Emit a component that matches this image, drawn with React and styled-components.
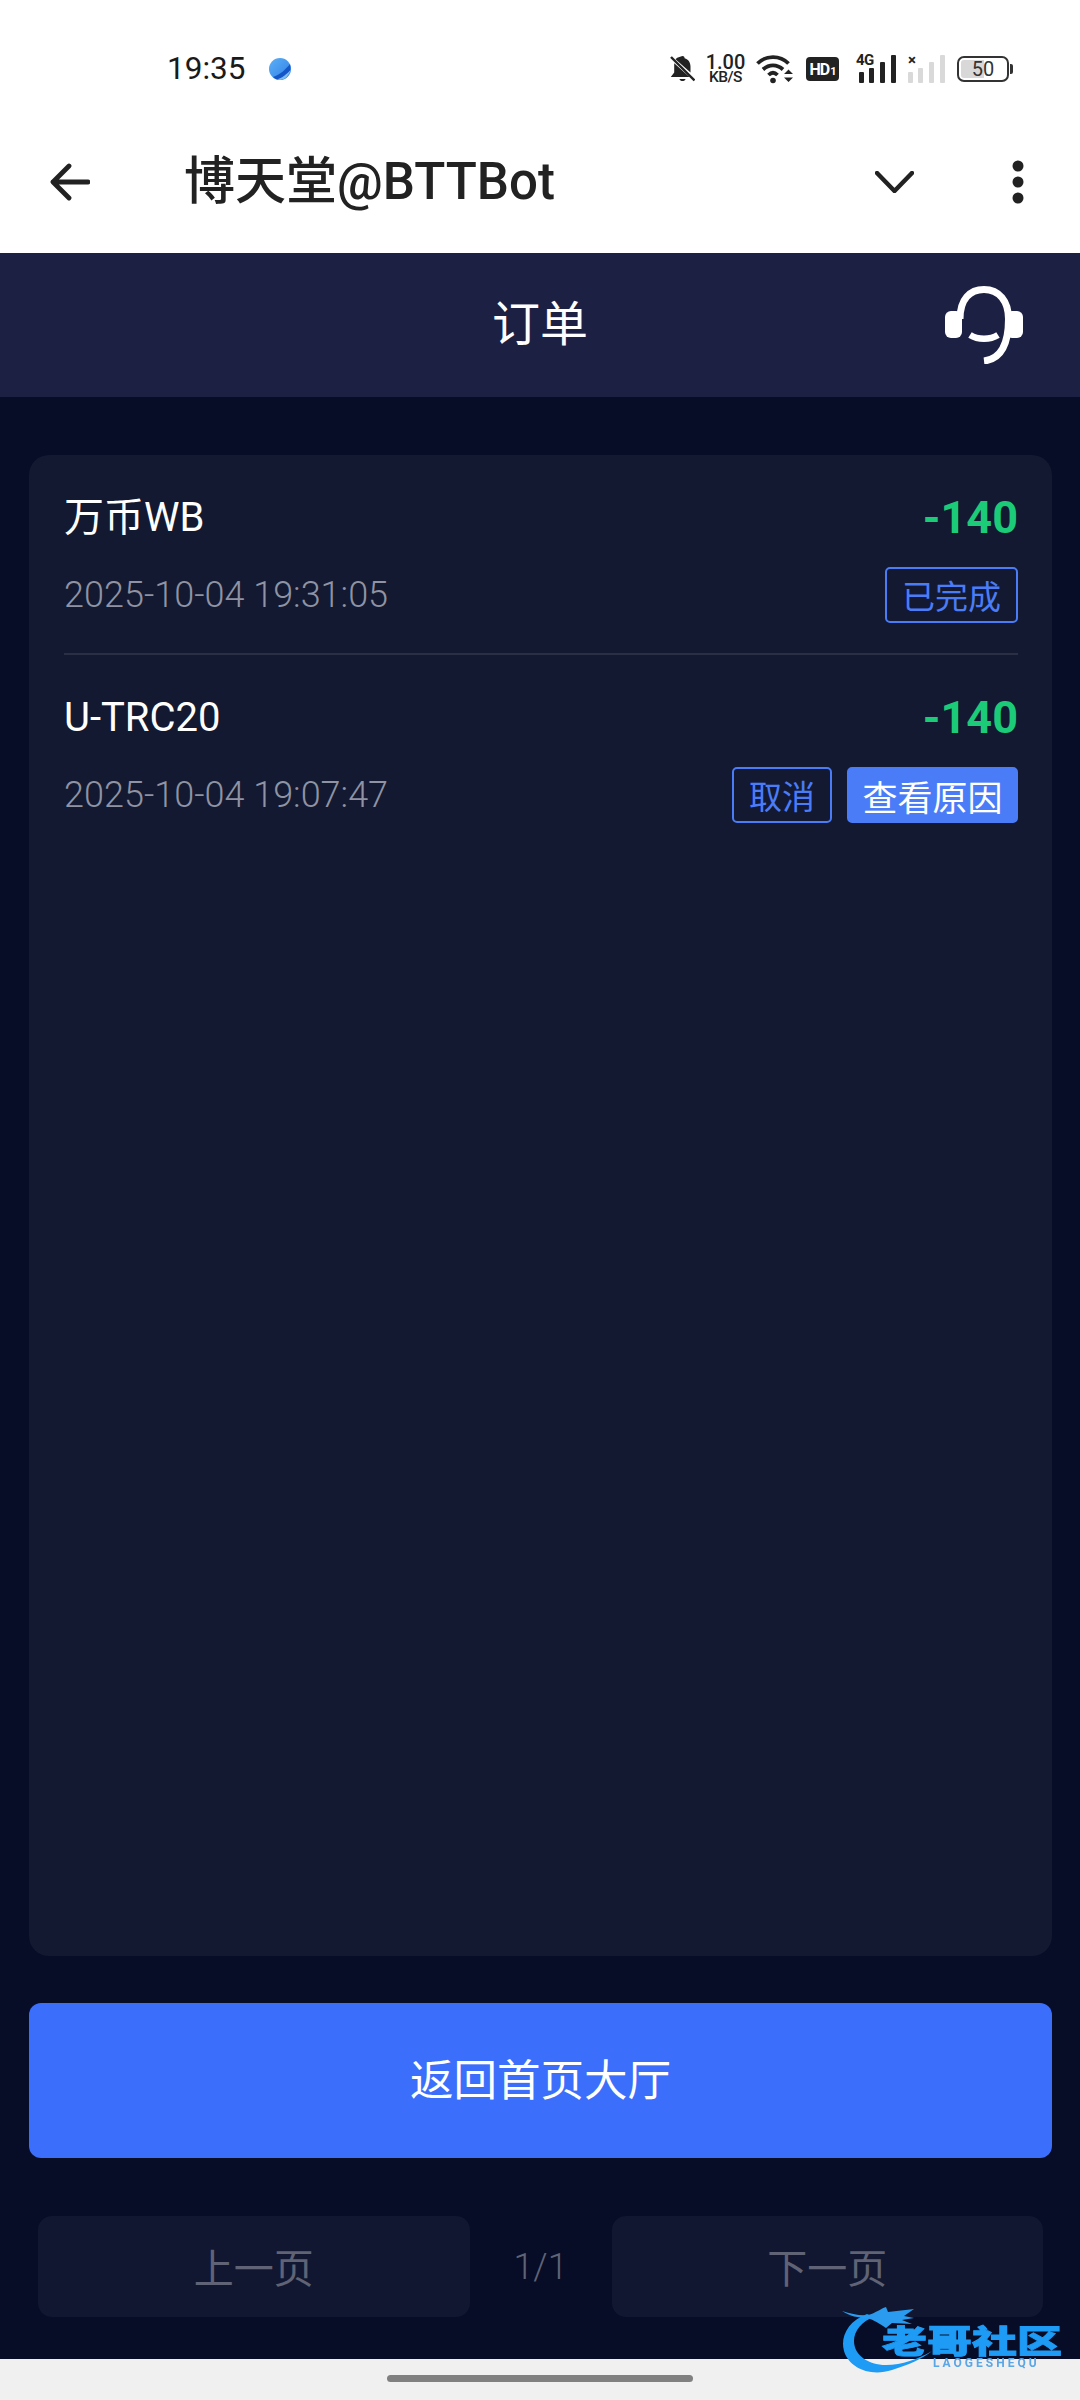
import React from "react";
import styled, { createGlobalStyle } from "styled-components";

const FONT = `Roboto, "Noto Sans CJK SC", sans-serif`;

const Global = createGlobalStyle`
  html, body { margin: 0; padding: 0; background: #fff; }
  * { box-sizing: border-box; }
`;

const Screen = styled.div`
  position: relative;
  width: 1080px;
  height: 2400px;
  display: flex;
  flex-direction: column;
  overflow: hidden;
  background: #070c27;
  font-family: ${FONT};
`;

const StatusBar = styled.div`
  height: 110px;
  background: #fff;
  display: flex;
  align-items: center;
  justify-content: space-between;
  padding: 28px 71px 0 167px;
  color: #1a1a1a;
`;
const StatusLeft = styled.div`
  display: flex;
  align-items: center;
  gap: 23px;
`;
const Clock = styled.span`
  font-size: 31.5px;
  line-height: 36px;
`;
const StatusRight = styled.div`
  display: flex;
  align-items: center;
`;
const Speed = styled.div`
  width: 39px;
  margin: 0 11px;
  display: flex;
  flex-direction: column;
  align-items: center;
  font-weight: 500;
  color: #222;
  white-space: nowrap;
`;
const SpeedValue = styled.span`
  font-size: 20px;
  line-height: 17px;
`;
const SpeedUnit = styled.span`
  font-size: 15.5px;
  line-height: 13px;
  letter-spacing: -0.5px;
`;
const HdBadge = styled.div`
  width: 33px;
  height: 24px;
  margin: 0 17px 0 11px;
  border-radius: 4px;
  background: #222;
  color: #fff;
  display: flex;
  align-items: center;
  justify-content: center;
  font-size: 16px;
  font-weight: 700;
  letter-spacing: -1px;
`;
const HdIndex = styled.span`
  font-size: 11px;
  margin-top: 4px;
  margin-left: 1px;
`;
const Signal = styled.div`
  position: relative;
  width: ${(p) => p.$w}px;
  height: 28px;
  margin-right: 12px;
`;
const SignalLabel = styled.span`
  position: absolute;
  left: 0;
  top: -2px;
  font-size: 15px;
  line-height: 15px;
  font-weight: 700;
  letter-spacing: -0.5px;
  color: #222;
`;
const Battery = styled.div`
  position: relative;
  width: 52px;
  height: 26px;
  border: 2px solid #333;
  border-radius: 7px;
  display: flex;
  align-items: center;
  justify-content: center;
  font-size: 20px;
  color: #333;
  background: linear-gradient(90deg, #d8d8d8 52%, #fff 52%);
  background-clip: content-box;
  padding: 2px;
  &::after {
    content: "";
    position: absolute;
    right: -6px;
    top: 6px;
    width: 3px;
    height: 10px;
    background: #333;
    border-radius: 0 2px 2px 0;
  }
`;

const AppBar = styled.div`
  height: 143px;
  background: #fff;
  display: flex;
  align-items: center;
  padding: 0 56px 0 50px;
  color: #222;
`;
const ChatTitle = styled.div`
  flex: 1;
  margin-left: 94px;
  font-size: 51px;
  font-weight: 500;
  line-height: 60px;
  white-space: nowrap;
`;
const AppIcons = styled.div`
  display: flex;
  align-items: center;
  gap: 98px;
`;

const Header = styled.div`
  height: 144px;
  background: #1c2042;
  display: grid;
  grid-template-columns: 1fr auto 1fr;
  align-items: center;
  padding-right: 57px;
`;
const HeaderTitle = styled.div`
  grid-column: 2;
  color: #fff;
  font-size: 48px;
  line-height: 60px;
  margin-left: 57px;
`;
const HeaderAction = styled.div`
  justify-self: end;
  display: flex;
`;

const Body = styled.div`
  flex: 1;
  display: flex;
  flex-direction: column;
  padding: 58px 28px 42px 29px;
`;
const Card = styled.div`
  flex: 1;
  background: #131930;
  border-radius: 20px;
  padding: 41px 34px 0 35px;
`;
const Row = styled.div`
  display: flex;
  flex-direction: column;
  gap: 27px;
  padding: 0 0 ${(p) => (p.$divided ? 30 : 0)}px;
  margin-bottom: 41px;
  border-bottom: ${(p) => (p.$divided ? "2px solid #2a2f45" : "none")};
`;
const RowLine = styled.div`
  display: flex;
  align-items: center;
  justify-content: space-between;
  min-height: ${(p) => p.$h}px;
`;
const Name = styled.span`
  color: #fff;
  font-size: 40px;
  line-height: 44px;
`;
const Amount = styled.span`
  color: #1ccb78;
  font-size: 45px;
  line-height: 44px;
  font-weight: 700;
`;
const Time = styled.span`
  color: #8f93a3;
  font-size: 36px;
  font-weight: 300;
`;
const Tags = styled.div`
  display: flex;
  gap: 15px;
`;
const Tag = styled.div`
  height: 56px;
  padding: 0 ${(p) => (p.$solid ? 13.5 : 15)}px;
  border-radius: 5px;
  border: 2px solid #4a7cf7;
  background: ${(p) => (p.$solid ? "#4a7cf7" : "transparent")};
  color: ${(p) => (p.$solid ? "#fff" : "#4a7cf7")};
  display: flex;
  align-items: center;
  font-size: ${(p) => (p.$solid ? 35 : 33)}px;
  white-space: nowrap;
`;

const MainButton = styled.div`
  height: 155px;
  margin-top: 47px;
  padding-bottom: 6px;
  border-radius: 12px;
  background: #3b6efb;
  color: #fff;
  font-size: 43.5px;
  display: flex;
  align-items: center;
  justify-content: center;
`;

const Pager = styled.div`
  height: 101px;
  margin: 58px 9px 0;
  display: flex;
  align-items: center;
`;
const PageButton = styled.div`
  flex: 1;
  height: 100%;
  padding-bottom: 2px;
  border-radius: 14px;
  background: #111730;
  color: #5f6375;
  font-size: 40px;
  display: flex;
  align-items: center;
  justify-content: center;
`;
const PageCount = styled.div`
  width: 142px;
  text-align: center;
  color: #5f6375;
  font-size: 36px;
  font-weight: 300;
`;

const NavBar = styled.div`
  height: 41px;
  background: #f0f0f0;
  display: flex;
  justify-content: center;
  padding-top: 16px;
`;
const NavHandle = styled.div`
  width: 306px;
  height: 7px;
  border-radius: 4px;
  background: #808080;
`;

const Watermark = styled.div`
  position: absolute;
  left: 842px;
  top: 2305px;
  width: 226px;
  height: 70px;
  filter: blur(0.7px);
`;
const WatermarkArt = styled.svg`
  position: absolute;
  inset: 0;
`;
const WatermarkName = styled.div`
  position: absolute;
  left: 40px;
  top: 12px;
  font-size: 45px;
  line-height: 50px;
  font-weight: 900;
  white-space: nowrap;
  color: #1e9bf5;
  -webkit-text-stroke: 1.2px #1e9bf5;
  transform: scaleY(0.72);
`;
const WatermarkSub = styled.div`
  position: absolute;
  left: 91px;
  top: 52px;
  font-size: 12px;
  line-height: 12px;
  font-weight: 700;
  letter-spacing: 3px;
  white-space: nowrap;
  color: #5aa6e6;
`;

const Orb = () => (
  <svg width="24" height="26" viewBox="0 0 24 26">
    <defs>
      <linearGradient id="orb" x1="0" y1="0" x2="1" y2="1">
        <stop offset="0" stopColor="#5cb0f5" />
        <stop offset="1" stopColor="#2f7fe8" />
      </linearGradient>
    </defs>
    <circle cx="12" cy="13" r="11" fill="url(#orb)" />
    <path d="M5 21C12 19 18 13 22 8C24 15 19 24 12 24C9.500 24 7 23 5 21Z" fill="#1456c8" />
    <path d="M9 23.500C14 22 19 18 22.500 14C21.500 19 17 24 12 24Z" fill="#7fbcf2" />
  </svg>
);

const Bell = () => (
  <svg width="25" height="28" viewBox="0 0 25 28" fill="#222">
    <path d="M12.500 1c1.200 0 2.100.8 2.100 2.200 3.900 1 5.900 4.300 5.900 8.300v6l-15-13.300c1-1 2.300-1.800 3.900-2.200C10.400 1.800 11.300 1 12.500 1Z" />
    <path d="M4.200 8.200 19.500 22H.8l3.400-4.500Z" />
    <path d="M9.500 24h6c-.5 2.800-5.500 2.800-6 0Z" />
    <path d="M1 2 24.500 25.500" stroke="#222" strokeWidth="2.400" />
  </svg>
);

const Wifi = () => (
  <svg width="39" height="30" viewBox="0 0 39 30" fill="none" stroke="#222" strokeWidth="3.800">
    <path d="M1.500 9.500C10 1 24 1 32.500 9.500" />
    <path d="M7 15.500C13 10 21 10 27 15.500" />
    <path d="M12.500 21C15.500 18 18.500 18 21.500 21" />
    <circle cx="17" cy="26.500" r="2.800" fill="#222" stroke="none" />
    <path d="M28 20 32.500 15.500 37 20ZM28 23.500 37 23.500 32.500 28Z" fill="#222" stroke="none" />
  </svg>
);

const Bars = ({ faded, width }) => {
  const fill = faded ? "#d9d9d9" : "#222";
  return (
    <svg width={width} height="28" viewBox={`0 0 ${width} 28`} fill={fill}>
      <rect x={width - 37} y="17" width="5" height="11" rx="1" />
      <rect x={width - 27} y="13" width="5" height="15" rx="1" />
      <rect x={width - 16} y="7" width="5" height="21" rx="1" />
      <rect x={width - 5} y="0" width="5" height="28" rx="1" />
    </svg>
  );
};

const BackArrow = () => (
  <svg width="40" height="38" viewBox="0 0 40 38" fill="none" stroke="#222" strokeWidth="4.800" strokeLinecap="round" strokeLinejoin="round">
    <path d="M38 19H3M19 3 3 19 19 35" />
  </svg>
);

const Chevron = () => (
  <svg width="39" height="22" viewBox="0 0 39 22" fill="none" stroke="#222" strokeWidth="4.500" strokeLinecap="round" strokeLinejoin="round">
    <path d="M2 2 19.500 20 37 2" />
  </svg>
);

const Dots = () => (
  <svg width="12" height="44" viewBox="0 0 12 44" fill="#222">
    <circle cx="6" cy="6" r="5.500" />
    <circle cx="6" cy="22" r="5.500" />
    <circle cx="6" cy="38" r="5.500" />
  </svg>
);

const Headset = () => (
  <svg width="78" height="78" viewBox="45 27 78 78" fill="none">
    <rect x="45" y="52" width="17" height="27" rx="6" fill="#fff" />
    <rect x="106" y="52" width="17" height="27" rx="6" fill="#fff" />
    <path d="M60 60C60 40 70 30.500 84 30.500C99 30.500 108.500 42 108.500 60C108.500 84 102 100 84 102" stroke="#fff" strokeWidth="7" />
    <path d="M70 76C78 81 90 81 98 76" stroke="#fff" strokeWidth="6.500" />
  </svg>
);

export default function App() {
  return (
    <Screen>
      <Global />
      <StatusBar>
        <StatusLeft>
          <Clock>19:35</Clock>
          <Orb />
        </StatusLeft>
        <StatusRight>
          <Bell />
          <Speed>
            <SpeedValue>1.00</SpeedValue>
            <SpeedUnit>KB/S</SpeedUnit>
          </Speed>
          <Wifi />
          <HdBadge>
            HD<HdIndex>1</HdIndex>
          </HdBadge>
          <Signal $w={40}>
            <SignalLabel>4G</SignalLabel>
            <Bars width={40} />
          </Signal>
          <Signal $w={37}>
            <SignalLabel>×</SignalLabel>
            <Bars faded width={37} />
          </Signal>
          <Battery>50</Battery>
        </StatusRight>
      </StatusBar>
      <AppBar>
        <BackArrow />
        <ChatTitle>博天堂@BTTBot</ChatTitle>
        <AppIcons>
          <Chevron />
          <Dots />
        </AppIcons>
      </AppBar>
      <Header>
        <HeaderTitle>订单</HeaderTitle>
        <HeaderAction>
          <Headset />
        </HeaderAction>
      </Header>
      <Body>
        <Card>
          <Row $divided>
            <RowLine $h={44}>
              <Name>万币WB</Name>
              <Amount>-140</Amount>
            </RowLine>
            <RowLine $h={56}>
              <Time>2025-10-04 19:31:05</Time>
              <Tags>
                <Tag>已完成</Tag>
              </Tags>
            </RowLine>
          </Row>
          <Row>
            <RowLine $h={44}>
              <Name>U-TRC20</Name>
              <Amount>-140</Amount>
            </RowLine>
            <RowLine $h={56}>
              <Time>2025-10-04 19:07:47</Time>
              <Tags>
                <Tag>取消</Tag>
                <Tag $solid>查看原因</Tag>
              </Tags>
            </RowLine>
          </Row>
        </Card>
        <MainButton>返回首页大厅</MainButton>
        <Pager>
          <PageButton>上一页</PageButton>
          <PageCount>1/1</PageCount>
          <PageButton>下一页</PageButton>
        </Pager>
      </Body>
      <NavBar>
        <NavHandle />
      </NavBar>
      <Watermark>
        <WatermarkArt width="226" height="70" viewBox="0 0 226 70" fill="none">
          <path d="M25 9C6 16 -2 32 2 46C7 63 28 72 50 65C66 60 80 54 90 46C76 54 60 60 44 60C26 60 12 50 12 36C12 26 20 16 32 12Z" fill="#1e9bf5" />
          <path d="M0 6C10 9 18 11 26 10C34 8 38 4 44 2L46 7L72 4L62 11L72 13L60 15L70 19L50 18L44 23C38 19 32 15 25 13C16 13 8 11 0 6Z" fill="#2a9bee" />
        </WatermarkArt>
        <WatermarkName>老哥社区</WatermarkName>
        <WatermarkSub>LAOGESHEQU</WatermarkSub>
      </Watermark>
    </Screen>
  );
}
